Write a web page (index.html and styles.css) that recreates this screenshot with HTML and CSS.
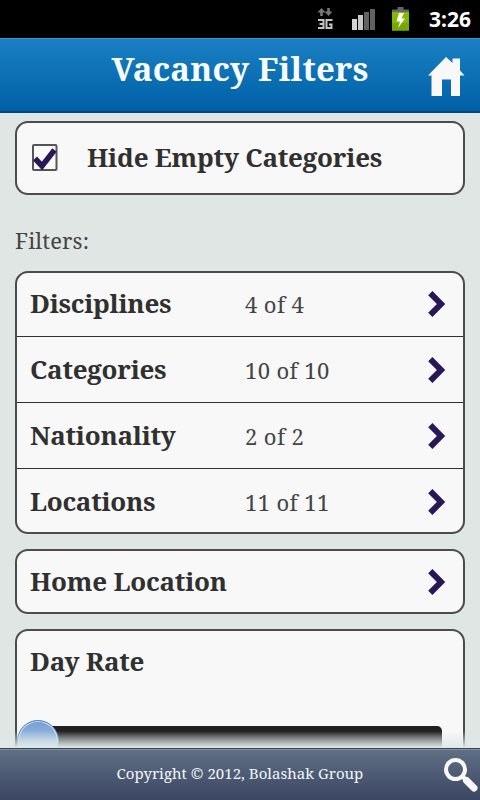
FILE: index.html
```html
<!DOCTYPE html>
<html lang="en">
<head>
<meta charset="utf-8">
<title>Vacancy Filters</title>
<link rel="stylesheet" href="styles.css">
</head>
<body>
<div class="screen">
  <div class="status">
    <svg class="network" width="16" height="22" viewBox="0 0 16 22"><path d="M4.500 0 .5 4.500h2.700V8h2.600V4.500h2.700zM11.500 8l4-4.500h-2.700V0h-2.600v3.500H7.500z" fill="#777"/><path d="M1 12h5.500v8H1M2.500 16h4M15.500 12h-6v8h5v-3.500H12" fill="none" stroke="#c4c4c4" stroke-width="2"/></svg>
    <svg class="signal" width="24" height="22" viewBox="0 0 24 22"><path d="M0 11h5v11H0z" fill="#d4d4d4"/><path d="M6 7h5v15H6z" fill="#c8c8c8"/><path d="M12 4h5v18h-5zM18 1h5v21h-5z" fill="#626262"/></svg>
    <svg class="battery" width="18" height="24" viewBox="0 0 18 24"><path d="M5.500 0h6v2.500H17V7H0V2.500h5.500z" fill="#666"/><path d="M0 5h17v18.500H0z" fill="#83b900"/><path d="M0 16h17v7.500H0z" fill="#75a800"/><path d="m7 6-2.500 8.500H8L6 21l7-9.500H9.500L12 6z" fill="#fff"/></svg>
    <span class="clock">3:26</span>
  </div>
  <header class="header">
    <h1>Vacancy Filters</h1>
    <svg class="home" width="38" height="40" viewBox="0 0 38 40"><path d="M0 18.500 18 0 24.500 6V1.500H32V13.500l4.500 5H32V39h-9V22.500h-9V39H3.500V18.500z" fill="#f8f8f8"/></svg>
  </header>
  <main class="content">
    <label class="panel toggle">
      <svg width="26" height="28" viewBox="0 0 26 28"><rect x="1" y="1" width="23.500" height="25" rx="1" fill="#fafafa" stroke="#555" stroke-width="2"/><path d="m3 14.500 7 7.500L22.500 6" fill="none" stroke="#281858" stroke-width="5.500"/></svg>
      <span class="label">Hide Empty Categories</span>
    </label>
    <p class="caption">Filters:</p>
    <div class="panel list">
      <div class="row"><span class="label">Disciplines</span><span class="count">4 of 4</span><svg class="chevron" width="18" height="26" viewBox="0 0 18 26"><path d="m2.300 2.200 10.700 10.800-10.700 10.800"/></svg></div>
      <div class="row"><span class="label">Categories</span><span class="count">10 of 10</span><svg class="chevron" width="18" height="26" viewBox="0 0 18 26"><path d="m2.300 2.200 10.700 10.800-10.700 10.800"/></svg></div>
      <div class="row"><span class="label">Nationality</span><span class="count">2 of 2</span><svg class="chevron" width="18" height="26" viewBox="0 0 18 26"><path d="m2.300 2.200 10.700 10.800-10.700 10.800"/></svg></div>
      <div class="row"><span class="label">Locations</span><span class="count">11 of 11</span><svg class="chevron" width="18" height="26" viewBox="0 0 18 26"><path d="m2.300 2.200 10.700 10.800-10.700 10.800"/></svg></div>
    </div>
    <div class="panel single"><span class="label">Home Location</span><svg class="chevron" width="18" height="26" viewBox="0 0 18 26"><path d="m2.300 2.200 10.700 10.800-10.700 10.800"/></svg></div>
    <div class="panel rate">
      <span class="label">Day Rate</span>
      <div class="track"><span class="thumb"></span></div>
    </div>
  </main>
  <footer class="footer">
    <span>Copyright © 2012, Bolashak Group</span>
    <svg class="search" width="36" height="36" viewBox="0 0 36 36"><circle cx="11.500" cy="11.500" r="9.500" fill="none" stroke="#f8f8f8" stroke-width="4"/><path d="m18 18 5 5" stroke="#f8f8f8" stroke-width="4.500"/><path d="m22.500 22.500 7.500 7.500" stroke="#f8f8f8" stroke-width="7" stroke-linecap="round"/></svg>
  </footer>
</div>
</body>
</html>
```
FILE: styles.css
```css
* { box-sizing: border-box; }
body { margin: 0; }
.screen { width: 480px; height: 800px; overflow: hidden; display: flex; flex-direction: column; background: #dfe6e3; font-family: "Droid Serif", "Noto Serif", "DejaVu Serif Condensed", "DejaVu Serif", serif; color: #303030; }
svg { display: block; flex: none; }
.status { height: 38px; flex: none; background: #000; display: flex; align-items: flex-start; padding: 8px 9px 0 317px; }
.signal { margin-left: 19px; }
.battery { margin: -1px 0 0 16px; }
.clock { margin-left: auto; font: bold 21px/23px "Noto Sans", sans-serif; color: #fff; }
.header { height: 75px; flex: none; position: relative; background: linear-gradient(#1a80c3, #0060a5); border-top: 1px solid #3a94cb; border-bottom: 2px solid #064476; text-align: center; }
.header h1 { margin: 0; font-size: 33px; letter-spacing: 0.2px; line-height: 40px; padding-top: 10px; color: #f8fbff; white-space: nowrap; }
.home { position: absolute; left: 428px; top: 18px; }
.content { height: 635px; flex: none; overflow: hidden; position: relative; padding: 8px 15px 0; border-top: 1px solid #d2e9ef; }
.content::after { content: ""; position: absolute; left: 0; right: 0; bottom: 0; height: 17px; background: linear-gradient(rgba(223,230,227,0), #dfe9e7); }
.panel { background: #f8f8f8; border: 2px solid #4c4c4c; border-radius: 13px; }
.toggle { display: flex; align-items: center; height: 74px; padding-left: 15px; gap: 29px; margin-top: -1px; }
.label { font-size: 26px; font-weight: bold; letter-spacing: -0.27px; line-height: 36px; margin-top: -2px; white-space: nowrap; }
.toggle .label, .single .label { letter-spacing: -0.22px; }
.caption { margin: 30px 0 0; height: 46px; font-size: 22px; letter-spacing: 0.15px; line-height: 31px; color: #444; }
.list { height: 263px; }
.row { height: 66px; display: flex; align-items: center; padding-left: 13px; border-bottom: 1px solid #303030; }
.row:first-child { margin-top: -2px; }
.row:last-child { border-bottom-color: transparent; }
.row .label { width: 215px; }
.count { font-size: 22px; letter-spacing: 0.4px; color: #444; padding-top: 1px; }
.chevron { margin-left: auto; margin-right: 17px; }
.chevron path { fill: none; stroke: #281858; stroke-width: 6; }
.single { height: 65px; margin-top: 15px; padding-left: 13px; display: flex; align-items: center; }
.rate { height: 170px; margin-top: 15px; padding: 14px 21px 0 13px; }
.rate .label { display: block; }
.track { margin: 47px 0 0 -8px; height: 40px; border-radius: 5px; background: linear-gradient(#202020 15%, #777 75%); position: relative; }
.thumb { position: absolute; left: -5px; top: -6px; width: 42px; height: 42px; border-radius: 50%; background: linear-gradient(#719cd3, #d5e2ef); border: 1px solid #4f80c3; box-shadow: inset 0 0 0 1px #d5e5f5; }
.footer { height: 52px; flex: none; position: relative; background: linear-gradient(#617086, #3b4662); border-top: 1px solid #344455; box-shadow: inset 0 1px #8293a2; color: #f4f7fb; text-align: center; font-size: 15px; letter-spacing: 0.03px; line-height: 48px; }
.search { position: absolute; left: 444px; top: 9px; }
```
